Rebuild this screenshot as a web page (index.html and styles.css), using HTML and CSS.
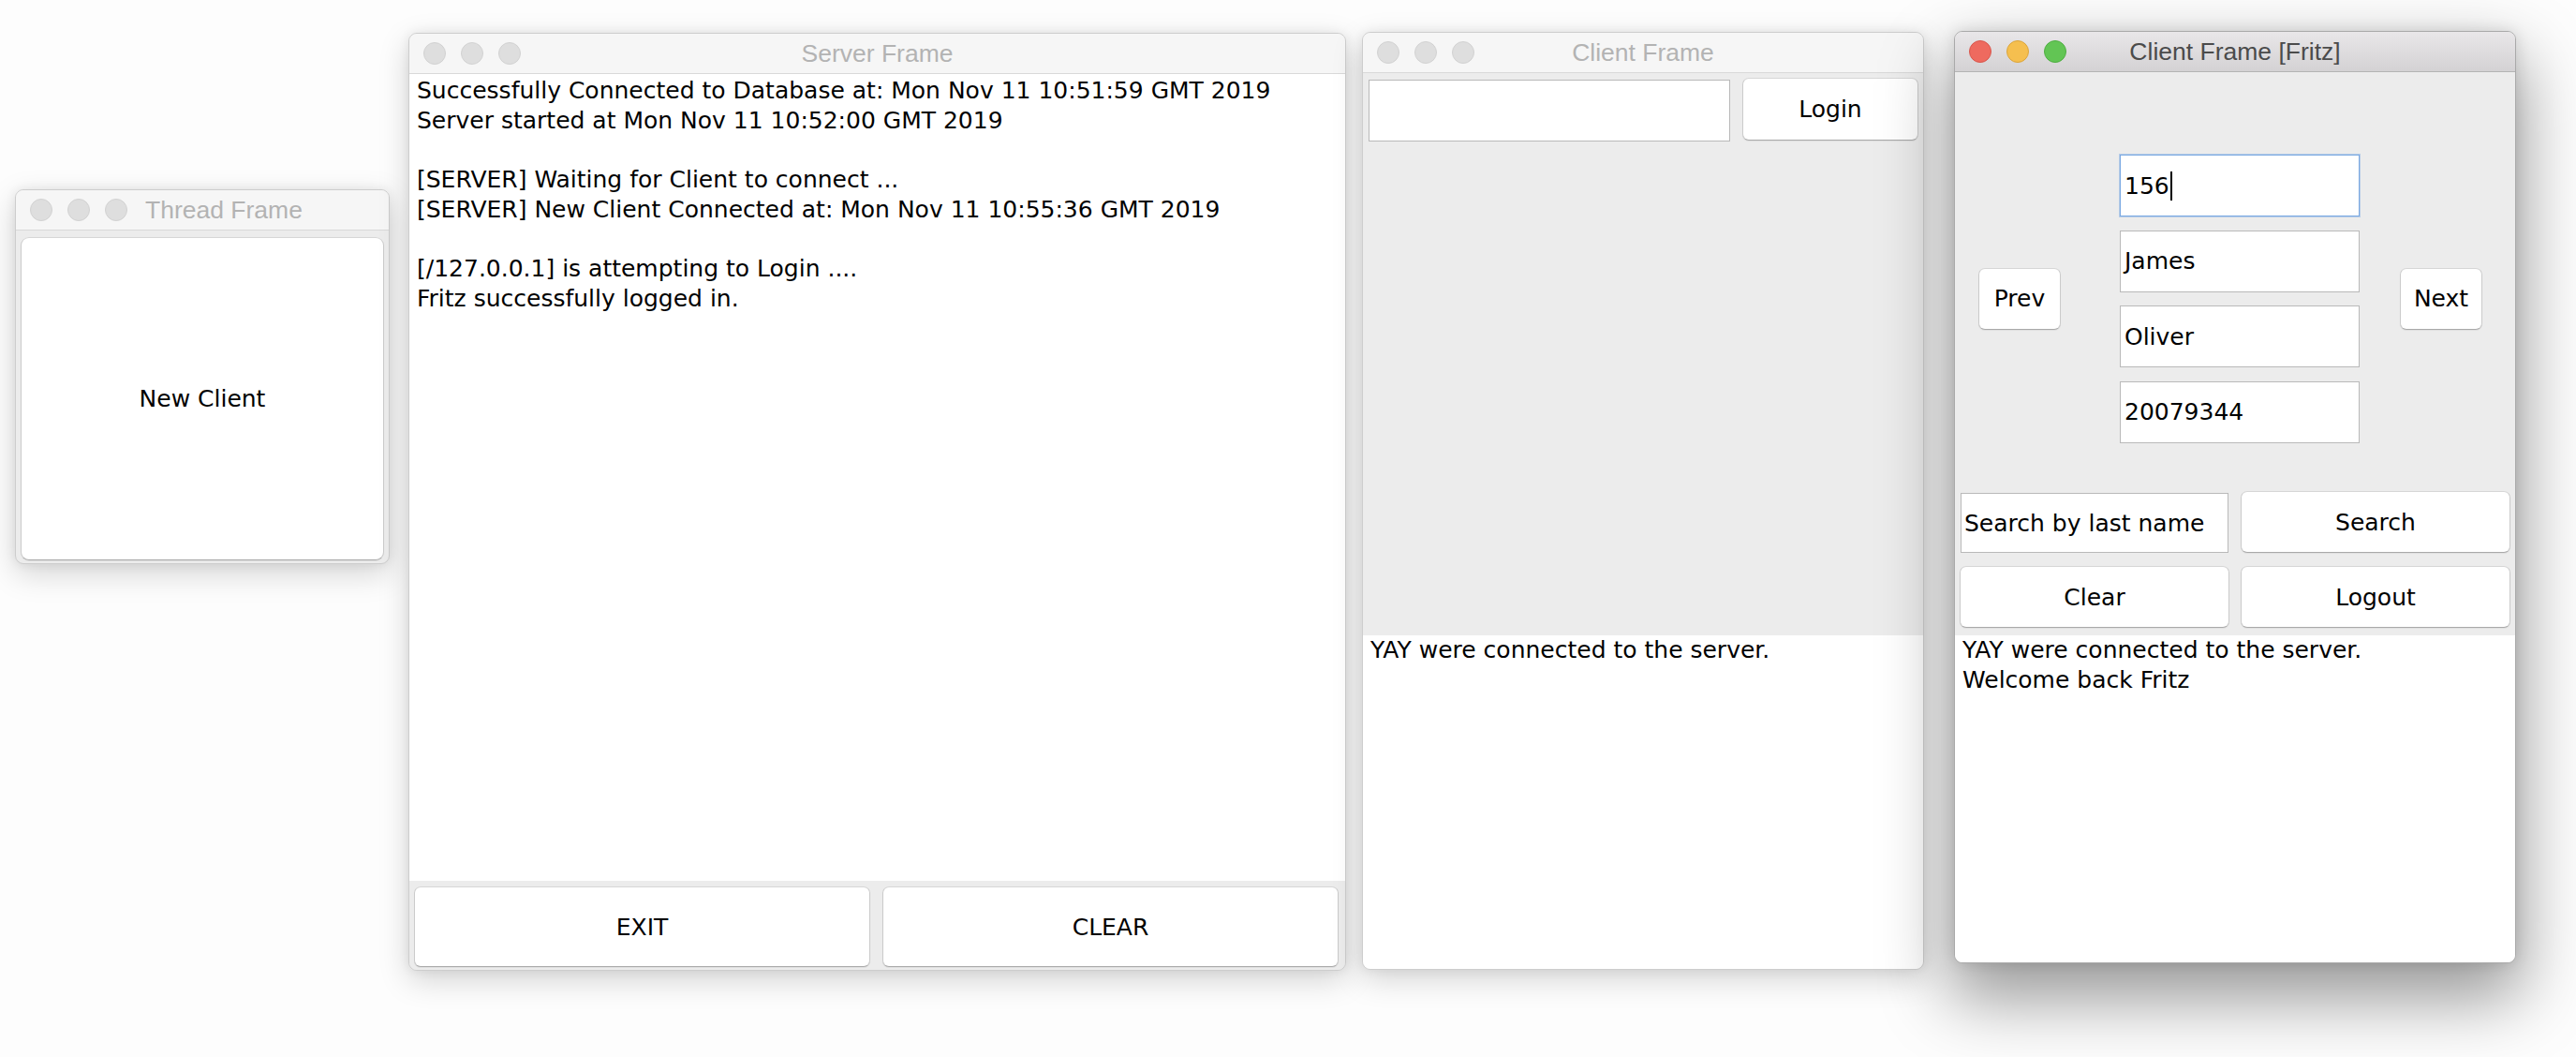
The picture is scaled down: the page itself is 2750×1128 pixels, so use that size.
FILE: index.html
```html
<!DOCTYPE html>
<html lang="en">
<head>
<meta charset="utf-8">
<title>Java Swing Frames</title>
<link rel="stylesheet" href="styles.css">
</head>
<body>
<main class="desktop">

  <section class="window window--thread">
    <header class="titlebar titlebar--tight">
      <div class="lights"><span class="light"></span><span class="light"></span><span class="light"></span></div>
      <div class="title">Thread Frame</div>
    </header>
    <div class="body body--thread">
      <div class="btn btn--fill">New Client</div>
    </div>
  </section>

  <section class="window window--server">
    <header class="titlebar">
      <div class="lights"><span class="light"></span><span class="light"></span><span class="light"></span></div>
      <div class="title">Server Frame</div>
    </header>
    <div class="body body--server">
      <div class="textarea textarea--server">
        <div class="line">Successfully Connected to Database at: Mon Nov 11 10:51:59 GMT 2019</div>
        <div class="line">Server started at Mon Nov 11 10:52:00 GMT 2019</div>
        <div class="line">&nbsp;</div>
        <div class="line">[SERVER] Waiting for Client to connect ...</div>
        <div class="line">[SERVER] New Client Connected at: Mon Nov 11 10:55:36 GMT 2019</div>
        <div class="line">&nbsp;</div>
        <div class="line">[/127.0.0.1] is attempting to Login ....</div>
        <div class="line">Fritz successfully logged in.</div>
      </div>
      <div class="btnbar">
        <div class="btn btn--flex">EXIT</div>
        <div class="btn btn--flex">CLEAR</div>
      </div>
    </div>
  </section>

  <section class="window window--client">
    <header class="titlebar">
      <div class="lights"><span class="light"></span><span class="light"></span><span class="light"></span></div>
      <div class="title">Client Frame</div>
    </header>
    <div class="body body--client">
      <div class="login-row">
        <div class="field field--login"></div>
        <div class="btn btn--login">Login</div>
      </div>
      <div class="textarea textarea--client">
        <div class="line">YAY were connected to the server.</div>
      </div>
    </div>
  </section>

  <section class="window window--fritz window--active">
    <header class="titlebar titlebar--active">
      <div class="lights">
        <span class="light light--close"></span><span class="light light--min"></span><span class="light light--max"></span>
      </div>
      <div class="title">Client Frame [Fritz]</div>
    </header>
    <div class="body body--fritz">
      <div class="record">
        <div class="btn btn--nav">Prev</div>
        <div class="fields">
          <div class="field field--focus">156<span class="caret"></span></div>
          <div class="field">James</div>
          <div class="field">Oliver</div>
          <div class="field">20079344</div>
        </div>
        <div class="btn btn--nav btn--next">Next</div>
      </div>
      <div class="actions">
        <div class="field field--search">Search by last name</div>
        <div class="btn">Search</div>
        <div class="btn">Clear</div>
        <div class="btn">Logout</div>
      </div>
      <div class="textarea textarea--fritz">
        <div class="line">YAY were connected to the server.</div>
        <div class="line">Welcome back Fritz</div>
      </div>
    </div>
  </section>

</main>
</body>
</html>
```

FILE: styles.css
```css
* { box-sizing: border-box; }

html, body {
  margin: 0;
  padding: 0;
  width: 2750px;
  height: 1128px;
  overflow: hidden;
  background: #ffffff;
}

body {
  font-family: "DejaVu Sans", "Liberation Sans", sans-serif;
  font-size: 25px;
  color: #000;
}

.desktop {
  position: relative;
  width: 2750px;
  height: 1128px;
  background: #fdfdfd;
}

/* ---------- windows ---------- */
.window {
  position: absolute;
  display: flex;
  flex-direction: column;
  border: 1px solid #cdcdcd;
  border-radius: 9px;
  background: #ececec;
  overflow: hidden;
  box-shadow: 0 10px 32px rgba(0, 0, 0, 0.17), 0 0 12px rgba(0, 0, 0, 0.07);
}

.window--thread { left: 16px;   top: 202px; width: 400px;  height: 400px; }
.window--server { left: 436px;  top: 35px;  width: 1001px; height: 1001px; }
.window--client { left: 1454px; top: 34px;  width: 600px;  height: 1001px; }
.window--fritz  { left: 2086px; top: 33px;  width: 600px;  height: 995px; }

.window--active {
  border-color: #a9a9a9;
  box-shadow: 0 32px 72px 6px rgba(0, 0, 0, 0.4), 0 0 16px rgba(0, 0, 0, 0.12);
}

/* ---------- title bar ---------- */
.titlebar {
  flex: none;
  height: 43px;
  display: grid;
  grid-template-columns: 1fr auto 1fr;
  align-items: center;
  padding: 0 15px;
  background: #f6f6f6;
  border-bottom: 1px solid #d9d9d9;
}

.titlebar--tight {
  grid-template-columns: auto auto 1fr;
  column-gap: 19px;
}

.titlebar--active {
  background: linear-gradient(#e9e7e9, #d4d2d4);
  border-bottom-color: #b4b4b4;
}

.lights {
  display: flex;
  gap: 16px;
}

.light {
  width: 24px;
  height: 24px;
  border-radius: 50%;
  background: #dedede;
  border: 1px solid #d2d2d2;
}

.light--close { background: #ee6a5f; border-color: #d8574d; }
.light--min   { background: #f5bf4f; border-color: #dba53b; }
.light--max   { background: #62c554; border-color: #4fae42; }

.title {
  font-family: "Liberation Sans", Arial, sans-serif;
  font-size: 26.5px;
  color: #b3b3b3;
  white-space: nowrap;
  line-height: 1;
}

.titlebar--active .title { color: #4b4b4b; }

/* ---------- generic widgets ---------- */
.body {
  flex: 1;
  display: flex;
  flex-direction: column;
  min-height: 0;
}

.btn {
  display: flex;
  align-items: center;
  justify-content: center;
  background: #ffffff;
  border: 1px solid #cbcbcb;
  border-top-color: #d6d6d6;
  border-bottom-color: #a9a9a9;
  border-radius: 7px;
  box-shadow: 0 1px 1px rgba(0, 0, 0, 0.06);
  white-space: nowrap;
}

.field {
  display: flex;
  align-items: center;
  height: 66px;
  padding: 0 4px;
  background: #ffffff;
  border: 1px solid #b9b9b9;
  white-space: nowrap;
}

.field--focus {
  border-color: #7aa8e2;
  box-shadow: 0 0 0 1px rgba(122, 168, 226, 0.45);
}

.caret {
  display: inline-block;
  width: 2px;
  height: 31px;
  margin-left: 1px;
  background: #000;
}

.textarea {
  background: #ffffff;
  padding: 0 8px;
  line-height: 31.7px;
  white-space: nowrap;
}

.line { height: 31.7px; }

/* ---------- thread frame ---------- */
.body--thread {
  padding: 7px 5px 3px 5px;
}

.btn--fill {
  flex: 1;
  border-radius: 9px;
}

/* ---------- server frame ---------- */
.textarea--server {
  flex: 1;
  padding-top: 2px;
}

.btnbar {
  flex: none;
  height: 95px;
  display: flex;
  gap: 13px;
  padding: 6px 7px 3px 5px;
  background: #ececec;
}

.btn--flex { flex: 1; }

/* ---------- client frame ---------- */
.login-row {
  flex: 1;
  display: flex;
  align-items: flex-start;
  gap: 13px;
  padding: 5px 5px 0 6px;
}

.field--login {
  width: 386px;
  margin-top: 2px;
}

.btn--login {
  width: 188px;
  height: 67px;
}

.textarea--client {
  flex: none;
  height: 356px;
}

/* ---------- fritz frame ---------- */
.record {
  display: flex;
  align-items: center;
  padding: 88px 0 0 25px;
}

.btn--nav {
  width: 88px;
  height: 66px;
}

.fields {
  display: flex;
  flex-direction: column;
  gap: 14.5px;
  width: 256px;
  margin-left: 63px;
}

.btn--next { margin-left: 43px; }

.actions {
  display: grid;
  grid-template-columns: 288px 288px;
  grid-auto-rows: 66px;
  column-gap: 12px;
  row-gap: 14px;
  margin-top: 51.5px;
  padding: 0 5px;
}

.field--search {
  height: 64px;
  margin: 2px 1px 0 1px;
  padding-left: 3px;
}

.textarea--fritz {
  flex: 1;
  margin-top: 8px;
}
```
